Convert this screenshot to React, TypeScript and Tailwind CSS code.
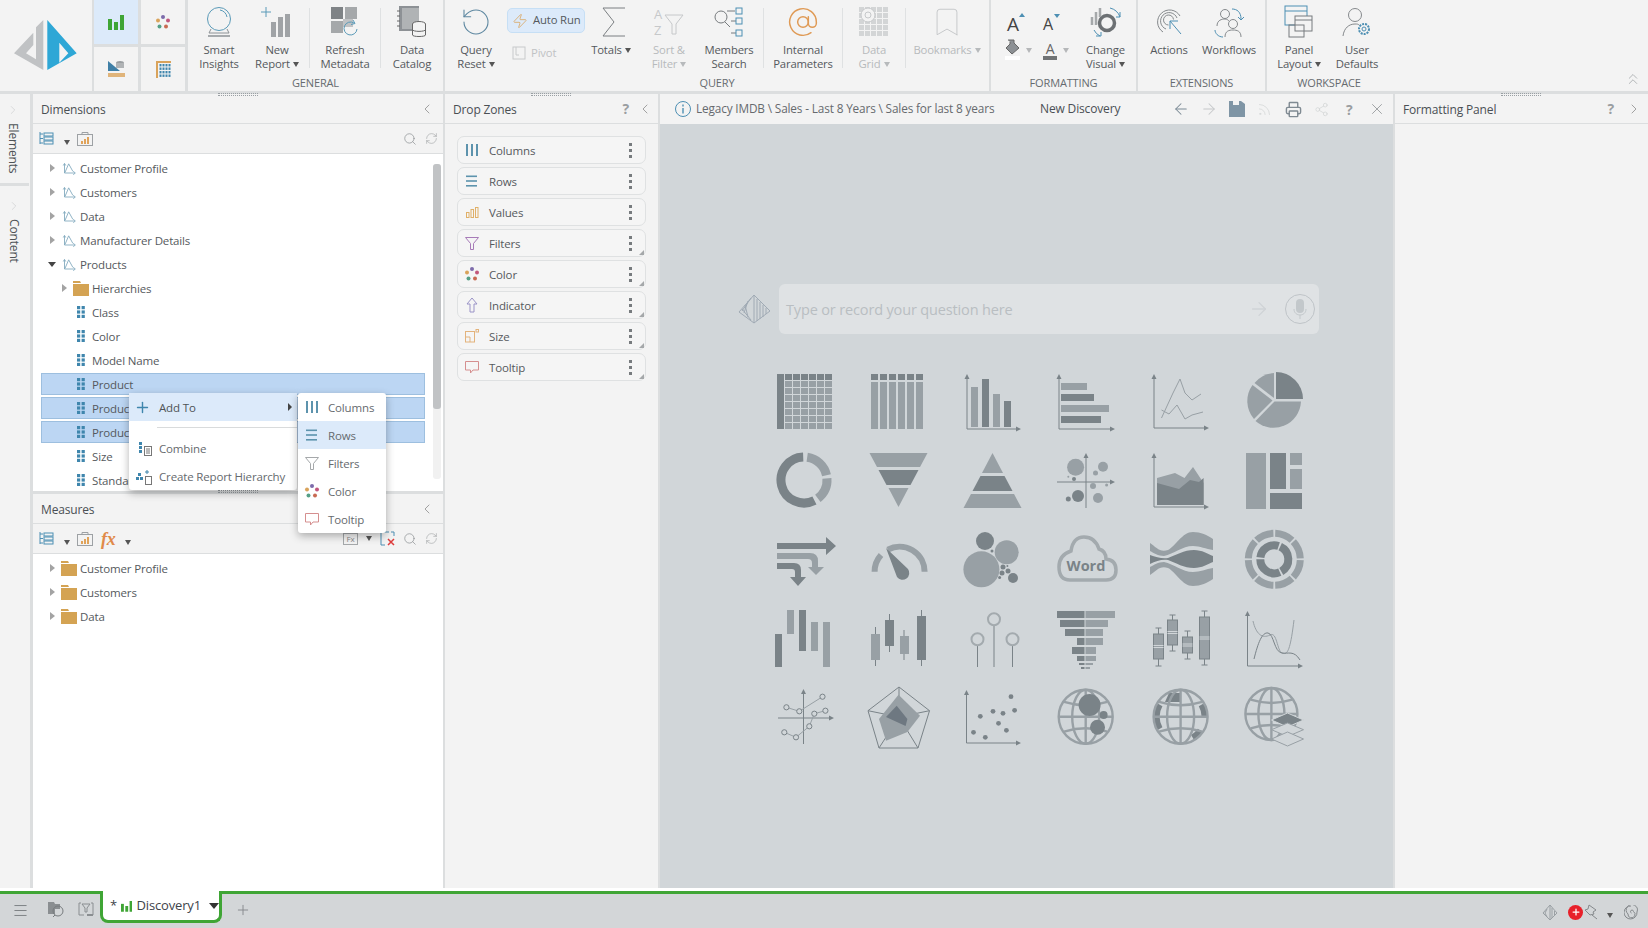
import type { ReactNode } from "react";
import {
  ArrowLeft,
  ArrowRight,
  AtSign,
  Bookmark,
  ChevronLeft,
  ChevronRight,
  ChevronsUp,
  Menu,
  Plus,
  Printer,
  RefreshCw,
  RotateCcw,
  Rss,
  Search,
  Share2,
  X,
  Zap,
} from "lucide-react";

const D = "#7a8388";
const M = "#98a0a5";
const L = "#a3aaae";

function arc(cx: number, cy: number, r: number, a0: number, a1: number) {
  const p = (a: number) => {
    const t = (a * Math.PI) / 180;
    return `${(cx + r * Math.sin(t)).toFixed(2)} ${(cy - r * Math.cos(t)).toFixed(2)}`;
  };
  return `M${p(a0)}A${r} ${r} 0 ${a1 - a0 > 180 ? 1 : 0} 1 ${p(a1)}`;
}

function Axes({ x = 4, y = 57, top = 3, right = 59 }: { x?: number; y?: number; top?: number; right?: number }) {
  return (
    <g>
      <path d={`M${x} ${top + 3}V${y}H${right - 3}`} stroke={D} strokeWidth="1" fill="none" />
      <path d={`M${x} ${top}l-2.5 5h5zM${right} ${y}l-5 -2.5v5z`} fill={D} />
    </g>
  );
}

const streamTop =
  "M0 14C6 18 10 24 18 21C26 17 32 3 43 3C51 3 57 6 63 10V21C56 20 50 17 43 17C32 17 24 25 14 27C8 27 4 24 0 22Z";

const charts: ReactNode[] = [
  // table
  <g key="table">
    <rect x="3" y="3" width="55" height="55" fill={M} />
    <rect x="3" y="3" width="55" height="6" fill={D} />
    <rect x="3" y="3" width="7" height="55" fill={D} />
    {[10, 18, 26, 34, 42, 50].map((x) => (
      <rect key={x} x={x} y="3" width="1" height="55" fill="#d1d6d9" />
    ))}
    {[9, 16, 23, 30, 37, 44, 51].map((y) => (
      <rect key={y} x="10" y={y} width="48" height="1" fill="#d1d6d9" />
    ))}
  </g>,
  // columns
  <g key="cols">
    {[3, 12, 21, 30, 39, 48].map((x) => (
      <g key={x}>
        <rect x={x} y="3" width="7" height="6" fill={D} />
        <rect x={x} y="11" width="7" height="47" fill={M} />
      </g>
    ))}
  </g>,
  // bars
  <g key="bars">
    <Axes x={5} y={58} />
    <rect x="9" y="16" width="7" height="40" fill={M} />
    <rect x="20" y="8" width="7" height="48" fill={D} />
    <rect x="31" y="23" width="7" height="33" fill={M} />
    <rect x="42" y="30" width="7" height="26" fill={D} />
  </g>,
  // horizontal bars
  <g key="hbars">
    <Axes x={3} y={58} />
    <rect x="5" y="12" width="26" height="7" fill={M} />
    <rect x="5" y="23" width="33" height="7" fill={D} />
    <rect x="5" y="34" width="48" height="7" fill={M} />
    <rect x="5" y="45" width="40" height="7" fill={D} />
  </g>,
  // lines
  <g key="lines">
    <Axes />
    <path d="M11.5 47L23 22L30 8L35 22L42 29L51 23" stroke={M} fill="none" />
    <path d="M11.5 39L19 43L27 34L35 48L42 44L53 41" stroke={M} fill="none" />
  </g>,
  // pie
  <g key="pie">
    <path d="M32 28V1A27 27 0 0 1 59 28Z" fill={D} />
    <path d="M30.5 30.5H57A27.5 27.5 0 0 1 11.5 50Z" fill={M} />
    <path d="M28.5 29.5L10 48A27.5 27.5 0 0 1 8.5 14Z" fill={M} />
    <path d="M30 27L10.5 12A27 27 0 0 1 30 2Z" fill={M} />
  </g>,
  // donut
  <g key="donut" fill="none" strokeWidth="9">
    <path d={arc(30, 30, 23, 153, 358)} stroke={D} />
    <path d={arc(30, 30, 23, 8, 78)} stroke={M} />
    <path d={arc(30, 30, 23, 86, 143)} stroke={M} />
  </g>,
  // funnel
  <g key="funnel">
    <path d="M1.5 3H59.5L52 17H9Z" fill={M} />
    <path d="M10.5 20H50.5L42.5 35H18.5Z" fill={D} />
    <path d="M20.5 38H40.5L30.5 57Z" fill={M} />
  </g>,
  // pyramid
  <g key="pyramid">
    <path d="M30.5 3L41 23H20Z" fill={M} />
    <path d="M18.5 26H42.5L50.5 41H10.5Z" fill={D} />
    <path d="M9 44H52L59.5 58H1.5Z" fill={M} />
  </g>,
  // bubbles in quadrants
  <g key="quad">
    <path d="M30 6V58M1 32H55" stroke={D} />
    <path d="M30 3l-2.5 5h5zM59 32l-5 -2.5v5z" fill={D} />
    <circle cx="19.6" cy="17.3" r="8.5" fill={M} />
    <circle cx="47" cy="16.7" r="5" fill={M} />
    <circle cx="39.5" cy="23" r="2.5" fill={M} />
    <circle cx="18" cy="29" r="2" fill={D} />
    <circle cx="12.3" cy="26.7" r="1" fill={M} />
    <circle cx="37" cy="36" r="3" fill={M} />
    <circle cx="50.6" cy="35" r="1.5" fill={M} />
    <circle cx="22" cy="46" r="6" fill={D} />
    <circle cx="12.3" cy="49" r="2.5" fill={D} />
    <circle cx="42" cy="48" r="5" fill={M} />
  </g>,
  // area
  <g key="area">
    <Axes />
    <path d="M7 28L25 23L34.5 28L43 17L53.6 33V55H7Z" fill={M} />
    <path d="M7 33L29 39L40 30L49 32L53.6 28V55H7Z" fill={D} />
  </g>,
  // treemap
  <g key="tree">
    <rect x="2" y="3" width="20" height="56" fill={M} />
    <rect x="26" y="3" width="16" height="36" fill={D} />
    <rect x="46" y="3" width="12" height="12" fill={M} />
    <rect x="46" y="19" width="12" height="20" fill={M} />
    <rect x="26" y="43" width="32" height="16" fill={D} />
  </g>,
  // sankey arrows
  <g key="sankey">
    <path d="M3 14H52V8L62 17L52 26V20H3Z" fill={D} />
    <path d="M3 24H36Q44 24 44 32V38H50L42 46L34 38H38V34Q38 30 34 30H3Z" fill={M} />
    <path d="M3 34H20Q27 34 27 41V48H32L24 57L16 48H21V43Q21 40 18 40H3Z" fill={D} />
  </g>,
  // gauge
  <g key="gauge">
    <path d={arc(31.6, 42.7, 25, -90, -48)} stroke={M} strokeWidth="6" fill="none" />
    <path d={arc(31.6, 42.7, 25, -28, 90)} stroke={M} strokeWidth="6" fill="none" />
    <path d="M18 19L40 40A6.5 6.5 0 0 1 29 48Z" fill={D} />
  </g>,
  // packed bubbles
  <g key="packed">
    <circle cx="19.4" cy="40.3" r="18" fill={M} />
    <circle cx="23" cy="12" r="9" fill={D} />
    <circle cx="44.7" cy="23.3" r="12" fill={M} />
    <circle cx="51" cy="49" r="5" fill={D} />
    <circle cx="41" cy="38" r="2.5" fill={D} />
    <circle cx="46" cy="42" r="2.5" fill={D} />
    <circle cx="40" cy="44" r="2.5" fill={D} />
    <circle cx="30" cy="22" r="1.5" fill={D} />
    <circle cx="37.6" cy="48.6" r="1.5" fill={D} />
    <circle cx="45.4" cy="37" r="1" fill={D} />
  </g>,
  // word cloud
  <g key="word">
    <path
      d="M14 51H50Q60 51 60 41Q60 31 50 30Q50 22 43 20Q39 8 28 8Q17 8 15 22Q3 26 3 38Q3 51 14 51Z"
      fill="none"
      stroke={L}
      strokeWidth="3.5"
    />
    <text x="30" y="42" textAnchor="middle" fontSize="14.5" fontWeight="700" letterSpacing="0" fill={D}>
      Word
    </text>
  </g>,
  // stream
  <g key="stream">
    <path d={streamTop} fill={M} />
    <path
      d="M0 26C6 28 12 30 18 29C26 26 34 21 44 21C52 21 58 25 63 27V33C58 35 52 39 44 39C34 39 26 34 18 31C12 30 6 32 0 35Z"
      fill={D}
    />
    <path d={streamTop} fill={M} transform="matrix(1 0 0 -1 0 60)" />
  </g>,
  // radial
  <g key="radial" fill="none">
    {[2, 47, 92, 137, 182, 227, 272, 317].map((a) => (
      <path key={a} d={arc(30.3, 30.3, 26, a, a + 41)} stroke={M} strokeWidth="7" />
    ))}
    <path d={arc(30.3, 30.3, 14, 25, 150)} stroke={D} strokeWidth="8" />
    <path d={arc(30.3, 30.3, 14, 157, 270)} stroke={D} strokeWidth="8" />
    <path d={arc(30.3, 30.3, 14, 277, 378)} stroke={D} strokeWidth="8" />
  </g>,
  // waterfall
  <g key="waterfall">
    <rect x="1" y="26" width="7" height="33" fill={D} />
    <rect x="13" y="2" width="7" height="24" fill={M} />
    <rect x="25" y="2" width="7" height="41" fill={D} />
    <rect x="37" y="14" width="7" height="29" fill={M} />
    <rect x="49" y="14" width="7" height="45" fill={M} />
  </g>,
  // candles
  <g key="candles">
    <path d="M7.5 19V58M21.5 6V44M36 22V52M53.5 2V58" stroke={D} />
    <rect x="3" y="26" width="9" height="26" fill={M} />
    <rect x="17" y="12" width="9" height="26" fill={D} />
    <rect x="32" y="28" width="9" height="18" fill={M} />
    <rect x="49" y="8" width="9" height="44" fill={D} />
  </g>,
  // lollipops
  <g key="lollipop" fill="none">
    <path d="M15.5 37V59M32 17V59M50.5 37V59" stroke={D} />
    <circle cx="15.5" cy="31.3" r="6" stroke={L} strokeWidth="2" />
    <circle cx="32" cy="11.3" r="6" stroke={L} strokeWidth="2" />
    <circle cx="50.5" cy="31.3" r="6" stroke={L} strokeWidth="2" />
  </g>,
  // tornado
  <g key="tornado">
    {[
      [3, 7, 1, 59],
      [12, 7, 4, 52],
      [21, 7, 9, 47],
      [30, 7, 21, 47],
      [39, 7, 16, 40],
      [48, 5, 21, 40],
      [55, 2, 23, 37],
      [59, 2, 25, 34],
    ].map(([y, h, l, r]) => (
      <g key={y}>
        <rect x={l} y={y} width={28.5 - l} height={h} fill={D} />
        <rect x="29.5" y={y} width={r - 29.5} height={h} fill={M} />
      </g>
    ))}
  </g>,
  // box plot
  <g key="box">
    {[
      [3.5, 26, 25, 20, 58],
      [17.5, 12, 25, 7, 43],
      [32.5, 29, 16, 23, 51],
      [49.5, 9, 42, 3, 57],
    ].map(([x, y, h, t, b]) => (
      <g key={x}>
        <path d={`M${x + 2} ${t}h6M${x + 5} ${t}V${b}M${x + 2} ${b}h6`} stroke={D} fill="none" />
        <rect x={x} y={y} width="10" height={h} fill={M} stroke={D} />
        <path d={`M${x} ${y + h / 2 - 1}h10M${x} ${y + h / 2 + 1}h10`} stroke="#d1d6d9" />
      </g>
    ))}
  </g>,
  // density
  <g key="density">
    <Axes x={3.5} y={58} />
    <path d="M9 13C12 26 18 31 26 27C33 23 33 43 38 45C43 47 46 45 50 12" stroke={M} fill="none" />
    <path d="M10 51C14 35 18 24 24 25C30 26 30 44 38 45C44 46 50 42 56 52" stroke={D} fill="none" />
  </g>,
  // quadrant scatter with lines
  <g key="quadline">
    <path d="M29.5 5V57M4 31H56" stroke={D} />
    <path d="M29.5 2l-2.5 5h5zM60 31l-5 -2.5v5z" fill={D} />
    <path d="M12.4 20.3L25.3 24.3L48.5 9.7M10.3 45.3L22 50.3L35.3 39.3L40.3 26.7L51.4 23.7" stroke={M} fill="none" />
    {[
      [12.4, 20.3],
      [25.3, 24.3],
      [48.5, 9.7],
      [40.3, 26.7],
      [51.4, 23.7],
      [35.3, 39.3],
      [10.3, 45.3],
      [22, 50.3],
    ].map(([x, y]) => (
      <circle key={x} cx={x} cy={y} r="2.6" fill="#d1d6d9" stroke={D} />
    ))}
  </g>,
  // radar
  <g key="radar">
    <path d="M31 0L61.5 23.7L50 61H11L0 23.7Z" fill="none" stroke={D} />
    <path d="M31 0V30M61.5 23.7L31 30M50 61L31 30M11 61L31 30M0 23.7L31 30" stroke={D} />
    <path d="M30.5 7.7L52 28.7L39.4 45L18 53.7L11 32Z" fill={M} />
    <path d="M28.7 18.7L39.4 32L37.6 39L18 30Z" fill="#6e7881" />
  </g>,
  // scatter
  <g key="scatter">
    <Axes x={4.5} y={56} />
    {[
      [49, 9.7],
      [18.3, 29.3],
      [31, 24.3],
      [41, 26.3],
      [52.6, 23.3],
      [36.5, 36.3],
      [44.4, 43.3],
      [11.5, 45.3],
      [23.3, 50.3],
    ].map(([x, y]) => (
      <circle key={x} cx={x} cy={y} r="2.4" fill={D} />
    ))}
  </g>,
  // globe with bubbles
  <g key="globe1">
    <Globe cx={29.7} cy={29.7} r={27} />
    <circle cx="33.6" cy="18" r="11" fill={D} />
    <circle cx="47.6" cy="28" r="4" fill={D} />
    <circle cx="41.5" cy="40.3" r="7.5" fill={D} />
  </g>,
  // filled globe
  <g key="globe2">
    <path d={arc(30.6, 29.7, 24, 270, 300)} stroke={D} strokeWidth="6" fill="none" />
    <path d={arc(30.6, 29.7, 24, 60, 90)} stroke={D} strokeWidth="6" fill="none" />
    <path d={arc(30.6, 29.7, 24, 240, 270)} stroke={D} strokeWidth="6" fill="none" />
    <path d={arc(30.6, 29.7, 24, 125, 150)} stroke={D} strokeWidth="6" fill="none" />
    <path d="M19 6H31V15H15Z" fill={D} />
    <Globe cx={30.6} cy={29.7} r={27} />
  </g>,
  // globe with layers
  <g key="globe3">
    <Globe cx={27.4} cy={27} r={26} />
    <path d="M43.5 26L59.5 33L43.5 40L27.5 33Z" fill={D} stroke="#d1d6d9" />
    <path d="M43.5 36L59.5 42.7L43.5 49.5L27.5 42.7Z" fill="#d1d6d9" stroke={M} />
    <path d="M43.5 45L59.5 52L43.5 59L27.5 52Z" fill="#d1d6d9" stroke={M} />
  </g>,
];

function Globe({ cx, cy, r }: { cx: number; cy: number; r: number }) {
  return (
    <g fill="none" stroke={M} strokeWidth="2.4">
      <circle cx={cx} cy={cy} r={r} />
      <path d={`M${cx} ${cy - r}V${cy + r}M${cx - r} ${cy}H${cx + r}`} />
      <ellipse cx={cx} cy={cy} rx={r * 0.5} ry={r} />
      <path d={`M${cx - r * 0.8} ${cy - r * 0.55}Q${cx} ${cy - r * 0.3} ${cx + r * 0.8} ${cy - r * 0.55}`} />
      <path d={`M${cx - r * 0.8} ${cy + r * 0.55}Q${cx} ${cy + r * 0.3} ${cx + r * 0.8} ${cy + r * 0.55}`} />
    </g>
  );
}

/* small icons */
function BarsIcon({ size = 16 }: { size?: number }) {
  return (
    <svg width={size} height={size} viewBox="0 0 16 16">
      <rect x="0" y="5" width="4" height="11" fill="#3fa535" />
      <rect x="6" y="8" width="4" height="8" fill="#3fa535" />
      <rect x="12" y="1" width="4" height="15" fill="#3fa535" />
    </svg>
  );
}

function ColorDots({ size = 16 }: { size?: number }) {
  return (
    <svg width={size} height={size} viewBox="0 0 16 16">
      <circle cx="8" cy="3" r="2" fill="#7d6bab" />
      <circle cx="3" cy="6.5" r="2" fill="#d9a35b" />
      <circle cx="13" cy="6.5" r="2" fill="#c2577c" />
      <circle cx="4.5" cy="12.5" r="2" fill="#55a087" />
      <circle cx="11" cy="12.5" r="2" fill="#c96a52" />
    </svg>
  );
}

function ZoneIcon({ kind, tone }: { kind: string; tone?: string }) {
  const blue = "#5d93ad";
  if (kind === "Columns")
    return (
      <svg width="16" height="16" viewBox="0 0 16 16" fill={blue}>
        <rect x="2" y="2" width="2" height="12" />
        <rect x="7" y="2" width="2" height="12" />
        <rect x="12" y="2" width="2" height="12" />
      </svg>
    );
  if (kind === "Rows")
    return (
      <svg width="16" height="16" viewBox="0 0 16 16" fill={blue}>
        <rect x="2" y="2.5" width="11" height="1.6" />
        <rect x="2" y="7.2" width="11" height="1.6" />
        <rect x="2" y="12" width="11" height="1.6" />
      </svg>
    );
  if (kind === "Values")
    return (
      <svg width="16" height="16" viewBox="0 0 16 16" fill="none" stroke="#e0b068">
        <rect x="2.5" y="8.5" width="2.5" height="5" />
        <rect x="7" y="5.5" width="2.5" height="8" />
        <rect x="11.5" y="3.5" width="2.5" height="10" />
      </svg>
    );
  if (kind === "Filters")
    return (
      <svg width="16" height="16" viewBox="0 0 16 16" fill="none" stroke={tone ?? "#a77bb8"}>
        <path d="M1.5 2.5H14.5L9.5 8.5V14.5H6.5V8.5Z" />
      </svg>
    );
  if (kind === "Color") return <ColorDots />;
  if (kind === "Indicator")
    return (
      <svg width="16" height="16" viewBox="0 0 16 16" fill="none" stroke="#9a93c7">
        <path d="M8 1L13 7H10V15H6V7H3Z" />
      </svg>
    );
  if (kind === "Size")
    return (
      <svg width="16" height="16" viewBox="0 0 16 16" fill="none" stroke="#e3b37c">
        <rect x="1.5" y="3.5" width="9" height="10.5" />
        <path d="M1.5 9H6V14" />
        <rect x="12" y="1.5" width="2.5" height="2.5" />
      </svg>
    );
  return (
    <svg width="16" height="16" viewBox="0 0 16 16" fill="none" stroke="#d58f8f">
      <path d="M1.5 2.5H14.5V11H9L6.5 14V11H1.5Z" />
    </svg>
  );
}

function DimIcon() {
  return (
    <svg className="ml-[2px]" width="18" height="16" viewBox="0 0 18 16" fill="none" stroke="#7ba5ba" strokeWidth="1">
      <path d="M3 3V14H15M1.5 5L3 2.5L4.5 5M13.5 12L16 14L13.5 16" />
      <path d="M3.5 13.5L8 3L13 12" />
    </svg>
  );
}

function AttrIcon() {
  return (
    <svg width="8" height="12" viewBox="0 0 8 12" fill="#3f86ad">
      {[0, 4.4, 8.8].map((y) => (
        <g key={y}>
          <rect x="0" y={y} width="3.2" height="3.2" />
          <rect x="4.6" y={y} width="3.2" height="3.2" />
        </g>
      ))}
    </svg>
  );
}

function FolderIcon() {
  return (
    <svg width="16" height="15" viewBox="0 0 16 15" fill="#d4a353">
      <path d="M0 0H7L8 2H0Z" />
      <path d="M0 3H16V15H0Z" />
    </svg>
  );
}

function Arrow({ open, hidden }: { open?: boolean; hidden?: boolean }) {
  return (
    <span className={`flex h-[10px] w-[8px] items-center justify-center ${hidden ? "invisible" : ""}`}>
      {open ? (
        <span className="h-0 w-0 border-x-[4px] border-t-[5px] border-x-transparent border-t-[#444]" />
      ) : (
        <span className="h-0 w-0 border-y-[4px] border-l-[5px] border-y-transparent border-l-[#a3a3a3]" />
      )}
    </span>
  );
}

function Caret({ color = "border-t-[#555]" }: { color?: string }) {
  return <span className={`inline-block h-0 w-0 border-x-[3.5px] border-t-[5px] border-x-transparent ${color}`} />;
}

function Grip() {
  return <div className="h-[3px] w-[40px] border-y border-dotted border-[#9aa0a4]" />;
}

/* ribbon */
function RibbonItem({
  w,
  icon,
  lines,
  off,
  drop,
}: {
  w: string;
  icon: ReactNode;
  lines: string[];
  off?: boolean;
  drop?: boolean;
}) {
  return (
    <div className={`flex shrink-0 flex-col items-center ${w}`}>
      <div className="flex h-[43px] items-center justify-center">{icon}</div>
      <div className={`text-center text-[11.3px] leading-[14px] ${off ? "text-[#b7babc]" : "text-[#55595d]"}`}>
        {lines.map((l, i) => (
          <div key={l} className="flex items-center justify-center gap-[3px] whitespace-nowrap">
            {l}
            {drop && i === lines.length - 1 && <Caret color={off ? "border-t-[#b7babc]" : "border-t-[#555]"} />}
          </div>
        ))}
      </div>
    </div>
  );
}

function Group({ w, label, children }: { w: string; label: string; children: ReactNode }) {
  return (
    <div className={`flex h-full shrink-0 flex-col border-r-2 border-[#dcdedf] ${w}`}>
      <div className="flex h-[75px] items-start">{children}</div>
      <div className="text-center text-[11px] leading-[16px] text-[#666b6f]">{label}</div>
    </div>
  );
}

function VSep({ className = "" }: { className?: string }) {
  return <div className={`mt-[8px] h-[60px] w-px shrink-0 bg-[#dfe1e2] ${className}`} />;
}

const teal = "#5a9ab8";
const greyInk = "#8d9296";

function Ribbon() {
  return (
    <div className="flex h-[91px] shrink-0 bg-[#f3f3f3]">
      {/* logo */}
      <svg className="w-[92px] shrink-0" height="91" viewBox="0 0 92 91">
        <path d="M43.3 20V70L14 53.3L33.3 32.7V45L26 53.3L36 59.3V27.3Z" fill="#c0c2c4" />
        <path fillRule="evenodd" d="M47.3 20L76.7 53.3L47.3 70ZM59.3 42.7V62.7L68.3 53.3Z" fill="#2ea7d6" />
      </svg>
      {/* view switch */}
      <div className="grid h-full w-[96px] shrink-0 grid-cols-[44px_44px] grid-rows-[44px_44px] gap-[3px] bg-[#dcdedf] pl-[2px] pr-[3px]">
        <div className="flex items-center justify-center bg-[#dceafa]">
          <BarsIcon />
        </div>
        <div className="flex items-center justify-center bg-[#f3f3f3]">
          <ColorDots />
        </div>
        <div className="flex items-center justify-center bg-[#f3f3f3]">
          <svg width="17" height="18" viewBox="0 0 17 18">
            <path d="M0 1L12 11H0Z" fill="#3f7fa6" />
            <ellipse cx="12" cy="3" rx="4" ry="2" fill="#9a9ea1" />
            <rect x="8" y="3" width="8" height="5" fill="#b0b3b5" />
            <rect x="0" y="13" width="17" height="4" fill="#e0b47a" />
          </svg>
        </div>
        <div className="flex items-center justify-center bg-[#f3f3f3]">
          <svg width="15" height="17" viewBox="0 0 15 17" fill="#3f86ad">
            <rect x="0" y="0" width="15" height="2" fill="#d9a35b" />
            <rect x="0" y="0" width="2" height="17" fill="#d9a35b" />
            {[3, 6.5, 10, 13.5].map((y) =>
              [3.5, 6.5, 9.5, 12.5].map((x) => <rect key={`${x}-${y}`} x={x} y={y} width="2" height="2.4" />),
            )}
          </svg>
        </div>
      </div>

      <Group w="w-[257px]" label="GENERAL">
        <RibbonItem
          w="w-[62px]"
          lines={["Smart", "Insights"]}
          icon={
            <svg width="26" height="32" viewBox="0 0 26 32" fill="none">
              <circle cx="13" cy="13" r="11.5" stroke={teal} />
              <path d="M5 23L3 27H23L21 23" stroke={greyInk} />
              <path d="M2 30H24" stroke={greyInk} strokeWidth="1.5" />
              <path d="M14 4A9 9 0 0 1 21 11" stroke={teal} />
            </svg>
          }
        />
        <RibbonItem
          w="w-[54px]"
          lines={["New", "Report"]}
          drop
          icon={
            <svg width="32" height="34" viewBox="0 0 32 34">
              <path d="M5 2V12M0 7H10" stroke={teal} />
              <rect x="10" y="17" width="5" height="15" fill="#a0a3a6" />
              <rect x="17" y="12" width="5" height="20" fill="#a0a3a6" />
              <rect x="24" y="9" width="5" height="23" fill="#a0a3a6" />
            </svg>
          }
        />
        <VSep className="ml-[5px]" />
        <RibbonItem
          w="w-[70px]"
          lines={["Refresh", "Metadata"]}
          icon={
            <svg width="32" height="34" viewBox="0 0 32 34">
              <rect x="2" y="2" width="12" height="12" fill="#7f8386" />
              <rect x="16" y="2" width="12" height="12" fill="#a5a8aa" />
              <rect x="2" y="16" width="12" height="12" fill="#a5a8aa" />
              <rect x="14" y="14" width="10" height="8" fill="#c0c2c4" />
              <path d="M28 24A6.5 6.5 0 1 1 25 18" stroke={teal} fill="none" />
              <path d="M24 15L26 18.5L22 19.5" stroke={teal} fill="none" />
            </svg>
          }
        />
        <VSep />
        <RibbonItem
          w="w-[62px]"
          lines={["Data", "Catalog"]}
          icon={
            <svg width="30" height="34" viewBox="0 0 30 34" fill="none">
              <rect x="2" y="1" width="20" height="25" fill="#8d9195" />
              <rect x="5" y="3" width="17" height="21" fill="#b0b3b5" />
              <path d="M0 6H3M0 11H3M0 16H3M0 21H3" stroke="#666" />
              <ellipse cx="22" cy="19" rx="6.5" ry="2.5" fill="#f3f3f3" stroke="#666" />
              <path d="M15.5 19V30C15.5 32 28.5 32 28.5 30V19M15.5 24.5C15.5 27 28.5 27 28.5 24.5" fill="#f3f3f3" stroke="#666" />
            </svg>
          }
        />
      </Group>

      <Group w="w-[546px]" label="QUERY">
        <RibbonItem
          w="w-[62px]"
          lines={["Query", "Reset"]}
          drop
          icon={<RotateCcw size={32} strokeWidth={0.8} color="#5d87a0" />}
        />
        <div className="flex w-[78px] shrink-0 flex-col">
          <div className="mt-[8px] flex h-[25px] w-[78px] items-center gap-[5px] whitespace-nowrap rounded-[5px] border border-[#c6dff5] bg-[#dceafa] pl-[4px] text-[11.3px] text-[#55595d]">
            <Zap size={16} strokeWidth={1} color="#d9973f" className="shrink-0" />
            Auto Run
          </div>
          <div className="mt-[12px] flex items-center gap-[5px] pl-[5px] text-[11.3px] text-[#c0c2c4]">
            <svg width="14" height="14" viewBox="0 0 14 14" fill="none" stroke="#c8cacb">
              <rect x="1" y="1" width="12" height="12" />
              <path d="M4 1V9H7" />
            </svg>
            Pivot
          </div>
        </div>
        <RibbonItem
          w="w-[52px]"
          lines={["Totals"]}
          drop
          icon={
            <svg className="ml-[6px]" width="24" height="32" viewBox="0 0 24 32" fill="none" stroke="#7b7f82">
              <path d="M23 2H1L12 16L1 30H23" />
            </svg>
          }
        />
        <RibbonItem
          w="w-[64px]"
          lines={["Sort &", "Filter"]}
          off
          drop
          icon={
            <div className="flex items-center">
              <div className="flex flex-col text-[13px] leading-[16px] text-[#c6c8ca]">
                <span>A</span>
                <span>Z</span>
              </div>
              <svg className="ml-[2px] mt-[6px]" width="20" height="22" viewBox="0 0 20 22" fill="none" stroke="#c6c8ca">
                <path d="M1 1H19L12 10V20H8V10Z" />
              </svg>
            </div>
          }
        />
        <RibbonItem
          w="w-[56px]"
          lines={["Members", "Search"]}
          icon={
            <svg width="32" height="32" viewBox="0 0 32 32" fill="none">
              <circle cx="8" cy="11" r="6" stroke="#777b7e" />
              <path d="M12 16L17 21" stroke="#777b7e" />
              <path d="M14 5H22M18 15H23M18 27H23" stroke="#777b7e" />
              <rect x="23" y="2" width="6" height="6" stroke="#4d8fb3" />
              <rect x="23" y="12" width="6" height="6" stroke="#4d8fb3" />
              <rect x="23" y="24" width="6" height="6" stroke="#4d8fb3" />
            </svg>
          }
        />
        <VSep className="ml-[6px]" />
        <RibbonItem w="w-[78px]" lines={["Internal", "Parameters"]} icon={<AtSign size={32} strokeWidth={1.1} color="#df9a55" />} />
        <VSep />
        <RibbonItem
          w="w-[62px]"
          lines={["Data", "Grid"]}
          off
          drop
          icon={
            <svg width="30" height="30" viewBox="0 0 30 30" fill="#d3d5d6">
              {[0, 6, 12, 18, 24].map((y) =>
                [0, 6, 12, 18, 24].map((x) => <rect key={`${x}-${y}`} x={x} y={y} width="5" height="5" />),
              )}
              <circle cx="9" cy="8" r="7" fill="#f3f3f3" stroke="#c6c8ca" />
              <circle cx="9" cy="8" r="3" fill="none" stroke="#c6c8ca" />
            </svg>
          }
        />
        <VSep />
        <RibbonItem
          w="w-[82px]"
          lines={["Bookmarks"]}
          off
          drop
          icon={<Bookmark size={34} strokeWidth={0.7} color="#c6c8ca" />}
        />
      </Group>

      <Group w="w-[147px]" label="FORMATTING">
        <div className="grid w-[84px] shrink-0 grid-cols-[36px_40px] pl-[16px] pt-[9px]">
          <div className="relative h-[34px] text-[19px] leading-[30px] text-[#444]">
            A<span className="absolute left-[12px] top-[4px] h-0 w-0 border-x-[3px] border-b-[4px] border-x-transparent border-b-[#4d8fb3]" />
          </div>
          <div className="relative h-[34px] text-[16px] leading-[30px] text-[#444]">
            A<span className="absolute left-[11px] top-[5px] h-0 w-0 border-x-[3px] border-t-[4px] border-x-transparent border-t-[#4d8fb3]" />
          </div>
          <div className="-ml-[2px] -mt-[4px] flex items-center gap-[6px]">
            <svg width="15" height="22" viewBox="0 0 15 22">
              <path d="M3 1H9V4L14 9L7 15L1 9L5 5V3" fill="#8d9195" stroke="#666" />
              <rect x="0" y="17" width="15" height="4" fill="#fff" />
            </svg>
            <Caret color="border-t-[#b5b7b9]" />
          </div>
          <div className="-mt-[4px] flex items-center gap-[6px]">
            <div className="flex w-[14px] flex-col items-center text-[14px] leading-[15px] text-[#666]">
              A<div className="h-[4px] w-[14px] bg-[#707375]" />
            </div>
            <Caret color="border-t-[#b5b7b9]" />
          </div>
        </div>
        <RibbonItem
          w="w-[61px]"
          lines={["Change", "Visual"]}
          drop
          icon={
            <svg width="32" height="34" viewBox="0 0 32 34" fill="none">
              <circle cx="17" cy="18" r="7.5" stroke="#6c7073" strokeWidth="3.5" />
              <path d="M2 20V12M6 20V7M10 12V3" stroke="#a5a8aa" strokeWidth="2.5" />
              <path d="M20 3A14 14 0 0 1 30 12M30 7V12H26" stroke="#4d8fb3" />
              <path d="M10 31A13 13 0 0 1 4 25M6 31H11V27" stroke="#4d8fb3" />
            </svg>
          }
        />
      </Group>

      <Group w="w-[129px]" label="EXTENSIONS">
        <RibbonItem
          w="w-[62px]"
          lines={["Actions"]}
          icon={
            <svg width="28" height="32" viewBox="0 0 28 32" fill="none" stroke="#85898c">
              <path d="M8 26A12 12 0 1 1 25 10" />
              <path d="M11 23A8.5 8.5 0 1 1 22 12" />
              <path d="M13.5 19A5 5 0 1 1 18.5 13.5" />
              <path d="M15 15L26 28M15 15V23M15 15H23" stroke="#4d8fb3" />
            </svg>
          }
        />
        <RibbonItem
          w="w-[58px]"
          lines={["Workflows"]}
          icon={
            <svg width="32" height="32" viewBox="0 0 32 32" fill="none" stroke="#85898c">
              <circle cx="12" cy="8" r="4.5" />
              <path d="M4 20C4 14 9 13 12 13C14 13 15 14 16 15" />
              <circle cx="20" cy="18" r="4.5" />
              <path d="M12 31C12 25 16 24 20 24C24 24 28 25 28 31" />
              <path d="M19 3C24 3 28 6 28 13M25 11L28 14L31 11M2 24C2 27 5 31 10 31" stroke="#4d8fb3" />
            </svg>
          }
        />
      </Group>

      <div className="flex h-full w-[124px] shrink-0 flex-col">
        <div className="flex h-[75px] items-start">
          <RibbonItem
            w="w-[64px]"
            lines={["Panel", "Layout"]}
            drop
            icon={
              <svg width="30" height="34" viewBox="0 0 30 34" fill="none">
                <rect x="1" y="1" width="22" height="19" stroke="#4d8fb3" />
                <path d="M1 6H23" stroke="#4d8fb3" />
                <rect x="11" y="11" width="17" height="15" fill="#f3f3f3" stroke="#777b7e" />
                <path d="M11 15H28" stroke="#777b7e" />
                <rect x="5" y="20" width="15" height="12" stroke="#777b7e" />
              </svg>
            }
          />
          <RibbonItem
            w="w-[52px]"
            lines={["User", "Defaults"]}
            icon={
              <svg width="30" height="32" viewBox="0 0 30 32" fill="none">
                <circle cx="13" cy="9" r="6.5" stroke="#85898c" />
                <path d="M1 30C2 22 7 18 13 18C15 18 16 18 17 19" stroke="#85898c" />
                <circle cx="22" cy="23" r="5" stroke="#4d8fb3" strokeWidth="2" strokeDasharray="2 1" />
                <circle cx="22" cy="23" r="2" stroke="#4d8fb3" />
              </svg>
            }
          />
        </div>
        <div className="text-center text-[11px] leading-[16px] text-[#666b6f]">WORKSPACE</div>
      </div>

      <div className="flex flex-1 items-end justify-end pb-[3px] pr-[6px]">
        <ChevronsUp size={18} strokeWidth={1} color="#9da1a4" />
      </div>
    </div>
  );
}

/* panels */
function PanelHead({ title, right, w }: { title: string; right?: ReactNode; w?: string }) {
  return (
    <div className={`flex h-[30px] shrink-0 items-center border-b border-[#dcdedf] bg-[#f3f3f3] pl-[8px] ${w ?? ""}`}>
      <span className="pt-[2px] text-[12px] font-medium text-[#4a4f54]">{title}</span>
      <div className="ml-auto flex items-center">{right}</div>
    </div>
  );
}

type Row = { label: string; kind: "dim" | "folder" | "attr"; level?: number; open?: boolean; sel?: boolean };

const dimRows: Row[] = [
  { label: "Customer Profile", kind: "dim" },
  { label: "Customers", kind: "dim" },
  { label: "Data", kind: "dim" },
  { label: "Manufacturer Details", kind: "dim" },
  { label: "Products", kind: "dim", open: true },
  { label: "Hierarchies", kind: "folder", level: 1 },
  { label: "Class", kind: "attr", level: 1 },
  { label: "Color", kind: "attr", level: 1 },
  { label: "Model Name", kind: "attr", level: 1 },
  { label: "Product", kind: "attr", level: 1, sel: true },
  { label: "Product Category", kind: "attr", level: 1, sel: true },
  { label: "Product Line", kind: "attr", level: 1, sel: true },
  { label: "Size", kind: "attr", level: 1 },
  { label: "Standard Cost", kind: "attr", level: 1 },
];

function TreeRow({ row }: { row: Row }) {
  const hasArrow = row.kind !== "attr";
  return (
    <div
      className={`mb-[2px] flex h-[22px] items-center pl-[6px] text-[11.5px] text-[#55595d] ${
        row.sel ? "border border-[#9dbfdf] bg-[#bcd6f3]" : "border border-transparent"
      }`}
    >
      {row.level === 1 && <span className="w-[12px] shrink-0" />}
      <Arrow open={row.open} hidden={!hasArrow} />
      <span className="flex w-[21px] shrink-0 items-center justify-center pl-[4px]">
        {row.kind === "dim" && <DimIcon />}
        {row.kind === "folder" && <FolderIcon />}
        {row.kind === "attr" && <AttrIcon />}
      </span>
      <span className="ml-[3px] whitespace-nowrap pt-[1px]">{row.label}</span>
    </div>
  );
}

function ToolbarSearch() {
  return (
    <div className="flex items-center gap-[8px]">
      <Search size={14} strokeWidth={1.2} color="#8a8e91" />
      <RefreshCw size={13} strokeWidth={1.2} color="#a5a8aa" />
    </div>
  );
}

function ViewToggle() {
  return (
    <>
      <svg width="15" height="13" viewBox="0 0 15 13" fill="none" stroke="#4d8fb3">
        <path d="M1 0V12M1 2H4M1 6.5H4M1 11H4" />
        <rect x="5" y="1" width="9" height="3" />
        <rect x="5" y="5" width="9" height="3" />
        <rect x="5" y="9" width="9" height="3" />
      </svg>
      <span className="ml-[10px]">
        <Caret />
      </span>
      <svg className="ml-[7px]" width="16" height="14" viewBox="0 0 16 14" fill="none">
        <rect x="0.5" y="2.5" width="15" height="11" stroke="#9da1a4" />
        <path d="M5 2.5V0.5H11V2.5" stroke="#9da1a4" />
        <rect x="4" y="9" width="2" height="3" fill="#e0a35a" />
        <rect x="7" y="7" width="2" height="5" fill="#e0a35a" />
        <rect x="10" y="5" width="2" height="7" fill="#e0a35a" />
      </svg>
    </>
  );
}

function LeftPanels() {
  return (
    <div className="relative flex w-[410px] shrink-0 flex-col">
      <div className="flex h-[397px] shrink-0 flex-col">
        <PanelHead
          title="Dimensions"
          right={<ChevronLeft size={16} strokeWidth={1} color="#777" className="mr-[8px]" />}
        />
        <div className="flex h-[30px] shrink-0 items-center border-b border-[#dcdedf] bg-[#f3f3f3] pl-[6px] pr-[5px]">
          <ViewToggle />
          <div className="ml-auto">
            <ToolbarSearch />
          </div>
        </div>
        <div className="flex min-h-0 flex-1 overflow-hidden bg-white pl-[8px] pt-[3px]">
          <div className="w-[384px] shrink-0">
            {dimRows.map((r) => (
              <TreeRow key={r.label} row={r} />
            ))}
          </div>
          <div className="ml-[8px] mt-[7px] h-[315px] w-[8px] rounded-[3px] bg-[#f1f1f1]">
            <div className="h-[245px] w-[8px] rounded-[3px] bg-[#c1c3c5]" />
          </div>
        </div>
      </div>
      <div className="h-[3px] shrink-0 bg-[#dcdedf]" />
      <div className="flex min-h-0 flex-1 flex-col">
        <PanelHead
          title="Measures"
          right={<ChevronLeft size={16} strokeWidth={1} color="#777" className="mr-[8px]" />}
        />
        <div className="flex h-[30px] shrink-0 items-center border-b border-[#dcdedf] bg-[#f3f3f3] pl-[6px] pr-[5px]">
          <ViewToggle />
          <span className="ml-[8px] font-['Liberation_Serif',serif] text-[18px] font-bold italic leading-none text-[#e08a4a]">fx</span>
          <span className="ml-[9px]">
            <Caret />
          </span>
          <div className="ml-auto flex items-center gap-[8px]">
            <span className="flex h-[12px] w-[15px] items-center justify-center border border-[#a5a8aa] text-[8px] text-[#888]">Fx</span>
            <Caret />
            <svg width="15" height="15" viewBox="0 0 15 15" fill="none">
              <path d="M9 1H1V14H5M11 1H14V5" stroke="#4d8fb3" />
              <path d="M8 8L14 14M14 8L8 14" stroke="#dd3b3b" strokeWidth="1.5" />
            </svg>
            <ToolbarSearch />
          </div>
        </div>
        <div className="flex-1 bg-white pl-[8px] pt-[3px]">
          {["Customer Profile", "Customers", "Data"].map((label) => (
            <TreeRow key={label} row={{ label, kind: "folder" }} />
          ))}
        </div>
      </div>

      <div className="absolute left-[185px] top-[-1px]">
        <Grip />
      </div>
      <div className="absolute left-[185px] top-[396px]">
        <Grip />
      </div>
    </div>
  );
}

const zones = ["Columns", "Rows", "Values", "Filters", "Color", "Indicator", "Size", "Tooltip"];

function DropZones() {
  return (
    <div className="relative ml-[2px] flex w-[213px] shrink-0 flex-col bg-[#f3f3f3]">
      <PanelHead
        title="Drop Zones"
        right={
          <>
            <span className="mr-[8px] text-[14px] font-bold text-[#9a9ea1]">?</span>
            <ChevronLeft size={16} strokeWidth={1} color="#777" className="mr-[5px]" />
          </>
        }
      />
      <div className="flex flex-col gap-[3px] pl-[12px] pt-[12px]">
        {zones.map((z, i) => (
          <div
            key={z}
            className="relative flex h-[28px] w-[189px] items-center rounded-[7px] border border-[#dfe1e2] bg-[#f5f5f5] pl-[6px] text-[11.5px] text-[#55595d]"
          >
            <span className="flex w-[16px] justify-center">
              <ZoneIcon kind={z} />
            </span>
            <span className="ml-[9px] pt-[1px]">{z}</span>
            <span className="ml-auto mr-[13px] flex flex-col gap-[3px]">
              <span className="h-[3px] w-[3px] bg-[#777b7e]" />
              <span className="h-[3px] w-[3px] bg-[#777b7e]" />
              <span className="h-[3px] w-[3px] bg-[#777b7e]" />
            </span>
            {i > 2 && (
              <span className="absolute bottom-[1px] right-[1px] h-0 w-0 border-b-[5px] border-l-[5px] border-b-[#a5a8aa] border-l-transparent" />
            )}
          </div>
        ))}
      </div>
      <div className="absolute left-[86px] top-[-1px]">
        <Grip />
      </div>
    </div>
  );
}

function Canvas() {
  return (
    <div className="ml-[2px] flex w-[733px] shrink-0 flex-col">
      <div className="flex h-[30px] shrink-0 items-center bg-[#f3f3f3] text-[11.8px] text-[#666a6e]">
        <svg className="ml-[15px]" width="16" height="16" viewBox="0 0 16 16" fill="none">
          <circle cx="8" cy="8" r="7.5" stroke="#4d8fb3" />
          <path d="M8 7V12.5M8 3.5V5.5" stroke="#4d8fb3" strokeWidth="1.4" />
        </svg>
        <span className="ml-[5px] w-[344px] whitespace-nowrap">Legacy IMDB \ Sales - Last 8 Years \ Sales for last 8 years</span>
        <span className="w-[85px] whitespace-nowrap text-[12px] font-medium text-[#4a4f54]">New Discovery</span>
        <ArrowLeft size={18} strokeWidth={1.4} color="#7b8a95" className="ml-[47px]" />
        <ArrowRight size={18} strokeWidth={1.4} color="#c6c8ca" className="ml-[10px]" />
        <svg className="ml-[11px]" width="16" height="16" viewBox="0 0 16 16" fill="#7f95a5">
          <path d="M0 0H12L16 3V16H0Z" />
          <rect x="4" y="0" width="6" height="4" fill="#f3f3f3" />
        </svg>
        <Rss size={15} strokeWidth={1.2} color="#d3d5d6" className="ml-[12px]" />
        <Printer size={17} strokeWidth={2} color="#7f8a92" className="ml-[13px]" />
        <Share2 size={15} strokeWidth={1.2} color="#d3d5d6" className="ml-[12px]" />
        <span className="ml-[17px] text-[14px] font-bold text-[#9a9ea1]">?</span>
        <X size={18} strokeWidth={1} color="#85898c" className="ml-[15px]" />
      </div>
      <div className="flex min-h-0 flex-1 flex-col bg-[#d1d6d9] pt-[160px]">
        <div className="ml-[78px] flex h-[50px] items-center">
          <svg width="32" height="30" viewBox="0 0 32 30" fill="none" stroke="#a0aab4" strokeWidth="1">
            <path d="M16 1L32 17L16 29L1 18Z" />
            <path d="M16 1V29M19 5V27M22 8V25M25 11V23M28 14V20M13 4L4 17M10 7L6 19M7 11L10 23M4 15L13 26" />
          </svg>
          <div className="ml-[9px] flex h-[50px] w-[540px] items-center rounded-[6px] bg-[#dfe2e4] pl-[7px] text-[14.5px] text-[#b9bec2]">
            <span className="pt-[2px]">Type or record your question here</span>
            <ArrowRight size={22} strokeWidth={1.4} color="#cfd3d6" className="ml-auto" />
            <span className="ml-[15px] mr-[4px] flex h-[30px] w-[30px] items-center justify-center rounded-full border border-[#bfc4c8]">
              <svg width="14" height="22" viewBox="0 0 14 22" fill="none">
                <rect x="3" y="1" width="8" height="14" rx="4" fill="#c3c8cb" />
                <path d="M1 11C1 15 4 17 7 17C10 17 13 15 13 11M7 17V21" stroke="#c3c8cb" />
              </svg>
            </span>
          </div>
        </div>
        <div className="ml-[97px] mt-[27px] grid grid-cols-[repeat(6,94px)] auto-rows-[79px]">
          {charts.map((c, i) => (
            <div key={i} className="flex items-center justify-center">
              <svg width="60" height="60" viewBox="0 0 60 60" className="overflow-visible">
                {c}
              </svg>
            </div>
          ))}
        </div>
      </div>
    </div>
  );
}

function ContextMenu() {
  return (
    <>
      <div className="absolute left-[129px] top-[299px] z-10 h-[97px] w-[168px] rounded-[3px] bg-white text-[11.5px] text-[#666a6e] shadow-[0_3px_8px_rgba(0,0,0,0.3)]">
        <div className="flex h-[28px] items-center bg-[#dceafa] text-[#4e5357]">
          <Plus size={17} strokeWidth={2} color="#3f86ad" className="ml-[5px]" />
          <span className="ml-[8px] pt-[1px]">Add To</span>
          <span className="ml-auto mr-[5px] h-0 w-0 border-y-[4px] border-l-[4px] border-y-transparent border-l-[#444]" />
        </div>
        <div className="ml-[28px] mt-[6px] h-px bg-[#d9dbdc]" />
        <div className="mt-[7px] flex h-[28px] items-center">
          <svg className="ml-[10px]" width="13" height="14" viewBox="0 0 13 14" fill="none">
            <rect x="0" y="0" width="3" height="3" fill="#3f86ad" />
            <rect x="0" y="4" width="3" height="3" fill="#3f86ad" />
            <rect x="0" y="8" width="3" height="3" fill="#3f86ad" />
            <rect x="5.5" y="4.5" width="7" height="9" stroke="#777" />
            <path d="M7 7H11M7 9H11M7 11H11" stroke="#777" />
          </svg>
          <span className="ml-[7px]">Combine</span>
        </div>
        <div className="flex h-[28px] items-center">
          <svg className="ml-[6px]" width="17" height="16" viewBox="0 0 17 16" fill="none">
            <rect x="3" y="4" width="3" height="3" fill="#3f86ad" />
            <rect x="1" y="8" width="3" height="3" fill="#3f86ad" />
            <rect x="5" y="8" width="3" height="3" fill="#3f86ad" />
            <rect x="10.5" y="7.5" width="6" height="8" stroke="#777" />
            <path d="M12 1V5M10 3H14" stroke="#3f86ad" />
          </svg>
          <span className="ml-[7px] whitespace-nowrap">Create Report Hierarchy</span>
        </div>
      </div>
      <div className="absolute left-[298px] top-[299px] z-10 w-[88px] overflow-hidden rounded-[3px] bg-white text-[11.5px] text-[#666a6e] shadow-[0_3px_8px_rgba(0,0,0,0.3)]">
        {["Columns", "Rows", "Filters", "Color", "Tooltip"].map((z) => (
          <div key={z} className={`flex h-[28px] items-center pl-[6px] ${z === "Rows" ? "bg-[#dceafa]" : ""}`}>
            <ZoneIcon kind={z} tone="#a5a8aa" />
            <span className="ml-[8px] pt-[2px]">{z}</span>
          </div>
        ))}
      </div>
    </>
  );
}

function BottomBar() {
  return (
    <div className="flex h-[37px] shrink-0 items-start border-t-[3px] border-[#3fa535] bg-[#d3d6d8]">
      <Menu size={17} strokeWidth={1.3} color="#777b7e" className="ml-[12px] mt-[8px]" />
      <svg className="ml-[19px] mt-[7px]" width="17" height="17" viewBox="0 0 17 17" fill="none">
        <path d="M0 1H6L7 3H12V8H0Z" fill="#8a8e91" />
        <rect x="0" y="4" width="7" height="9" fill="#8a8e91" />
        <circle cx="10" cy="10" r="5" stroke="#777b7e" />
        <path d="M7 14L5 16" stroke="#777b7e" />
      </svg>
      <svg className="ml-[13px] mt-[8px]" width="16" height="15" viewBox="0 0 16 15" fill="none" stroke="#8a8e91">
        <path d="M3 1H1V13H6M13 1H15V13H11M4 2H12L9 6V10H7V6Z" />
        <path d="M9 13H15" strokeWidth="2" />
      </svg>
      <div className="ml-[6px] -mt-[3px] flex h-[32px] w-[122px] shrink-0 items-center rounded-b-[8px] border-x-[3px] border-b-[3px] border-[#3fa535] bg-white pl-[7px] text-[13px] text-[#3e444a]">
        <span className="mr-[4px]">*</span>
        <BarsIcon size={12} />
        <span className="ml-[4px]">Discovery1</span>
        <span className="ml-[8px] h-0 w-0 border-x-[5px] border-t-[6px] border-x-transparent border-t-[#333]" />
      </div>
      <Plus size={16} strokeWidth={1.4} color="#85898c" className="ml-[13px] mt-[8px]" />
      <div className="ml-auto mr-[9px] mt-[6px] flex items-center">
        <svg width="16" height="17" viewBox="0 0 16 17" fill="none" stroke="#9aa0a4">
          <path d="M8 1L15 9L8 16L1 9ZM8 1V16M10 4V14M12.5 7V11M5 5L3 9L5 13" />
        </svg>
        <span className="ml-[10px] flex h-[15px] w-[15px] items-center justify-center rounded-full bg-[#e8202a]">
          <Plus size={10} strokeWidth={3} color="#fff" />
        </span>
        <svg width="15" height="16" viewBox="0 0 15 16" fill="none" stroke="#85898c">
          <path d="M6 1L13 6L10 8L11 10L7 11L2 6L5 5ZM9 11L14 15" />
        </svg>
        <span className="ml-[9px]">
          <Caret />
        </span>
        <svg className="ml-[11px]" width="15" height="15" viewBox="0 0 15 15" fill="none" stroke="#85898c">
          <path d="M7.5 8A1.5 1.5 0 1 1 9.5 6.5A3.5 3.5 0 1 1 4 9A5.5 5.5 0 1 1 13 7A6.5 6.5 0 1 1 7 1" />
        </svg>
      </div>
    </div>
  );
}

export default function App() {
  return (
    <div className="flex h-[928px] w-[1648px] flex-col overflow-hidden bg-[#dcdedf] font-['Open_Sans',sans-serif] tracking-[-0.15px]">
      <Ribbon />
      <div className="relative mt-[3px] flex min-h-0 flex-1">
        {/* side tabs */}
        <div className="flex w-[30px] shrink-0 flex-col items-center bg-[#f3f3f3] pr-[2px] text-[12px] text-[#4e5357]">
          <div className="flex h-[92px] w-[30px] flex-col items-center border-b-[3px] border-[#dcdedf] pr-[3px] pt-[9px]">
            <ChevronRight size={14} strokeWidth={1} color="#c6c8ca" />
            <span className="mt-[6px] [writing-mode:vertical-rl]">Elements</span>
          </div>
          <div className="flex flex-col items-center pt-[13px]">
            <ChevronRight size={14} strokeWidth={1} color="#c6c8ca" />
            <span className="mt-[6px] [writing-mode:vertical-rl]">Content</span>
          </div>
        </div>
        <div className="ml-[3px] flex min-w-0 flex-1">
          <LeftPanels />
          <DropZones />
          <Canvas />
          <div className="relative ml-[2px] flex w-[253px] shrink-0 flex-col bg-[#f3f3f3]">
            <PanelHead
              title="Formatting Panel"
              right={
                <>
                  <span className="mr-[12px] text-[14px] font-bold text-[#9a9ea1]">?</span>
                  <ChevronRight size={16} strokeWidth={1} color="#777" className="mr-[6px]" />
                </>
              }
            />
            <div className="absolute left-[106px] top-[-1px]">
              <Grip />
            </div>
          </div>
        </div>
        <ContextMenu />
      </div>
      <div className="h-[3px] shrink-0 bg-white" />
      <BottomBar />
    </div>
  );
}
